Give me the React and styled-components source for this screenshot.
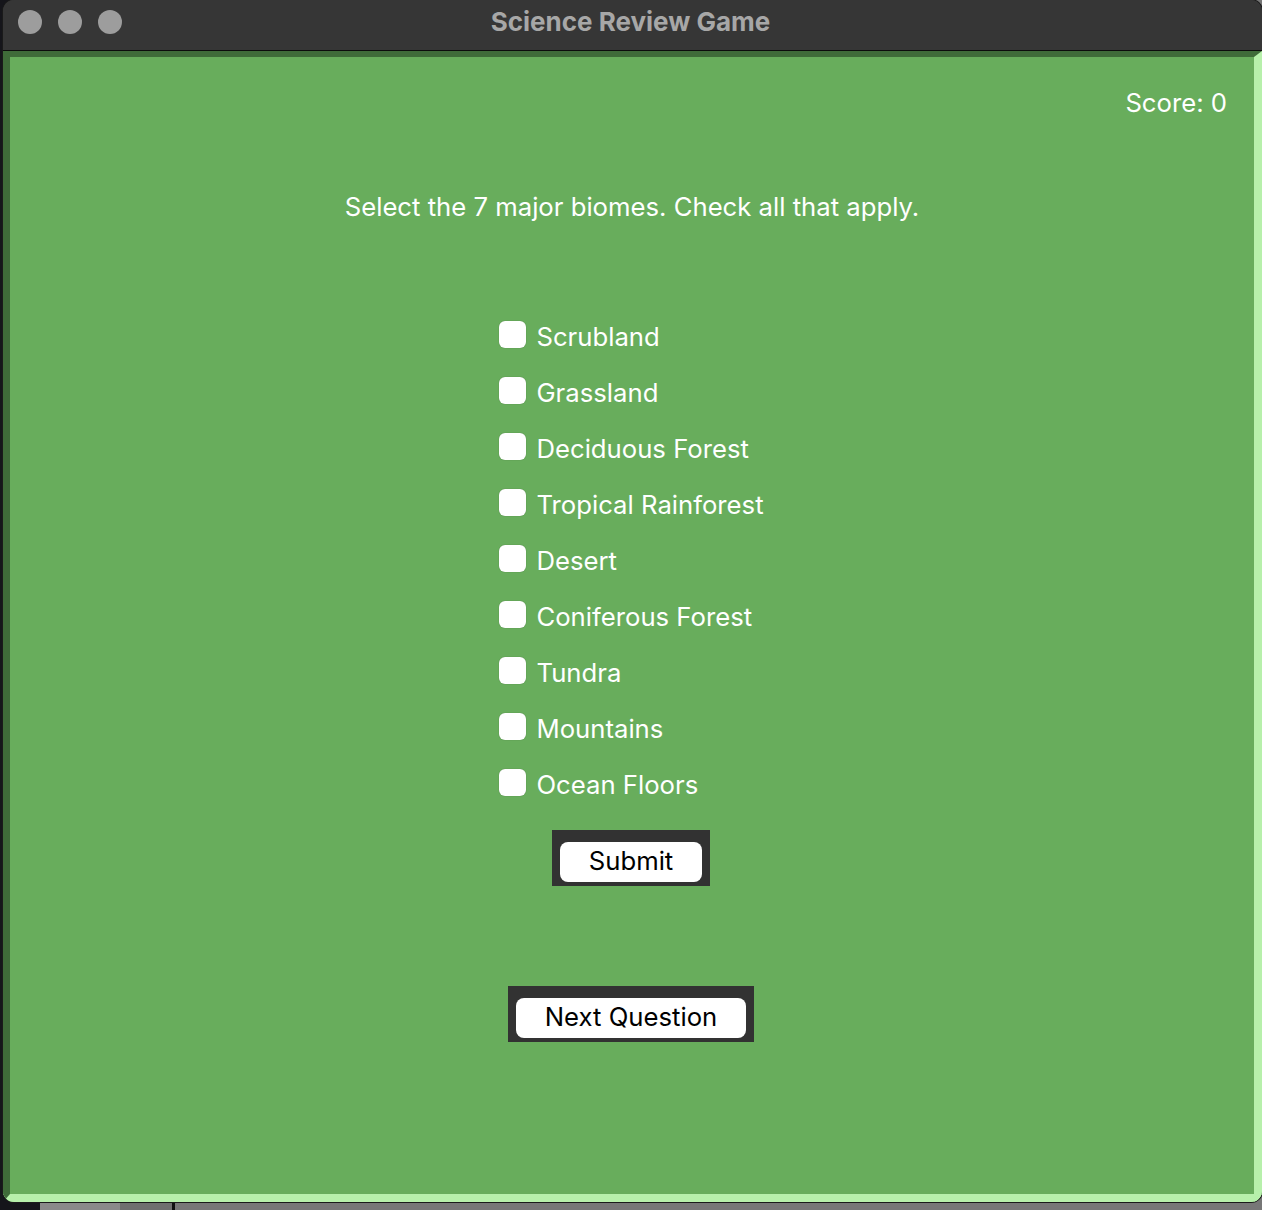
import React from "react";
import styled, { createGlobalStyle } from "styled-components";

const Global = createGlobalStyle`
  html, body { margin: 0; padding: 0; }
  body {
    background: #6f6f6f;
    width: 1262px;
    height: 1210px;
    overflow: hidden;
    font-family: Inter, "Liberation Sans", sans-serif;
  }
`;

const Desktop = styled.div`
  position: relative;
  width: 1262px;
  height: 1210px;
  background: linear-gradient(90deg, #15151a 0 40px, #8a8a8a 40px 120px, #6f6f6f 120px 172px, #111 172px 175px, #777 175px);
`;

const Window = styled.div`
  margin-left: 3px;
  width: 1259px;
  height: 1202px;
  border-radius: 11px;
  overflow: hidden;
  display: flex;
  flex-direction: column;
  background: #363636;
  box-shadow: 0 0 0 1px #1a1a1a;
`;

const TitleBar = styled.div`
  position: relative;
  height: 50px;
  flex: none;
  display: flex;
  align-items: center;
  justify-content: center;
  background: #363636;
  border-bottom: 1px solid #0c0c0c;
`;

const Lights = styled.div`
  position: absolute;
  left: 15px;
  top: 10px;
  display: flex;
  gap: 16px;
`;

const Light = styled.span`
  width: 24px;
  height: 24px;
  border-radius: 50%;
  background: #9d9d9d;
`;

const Title = styled.div`
  font-family: Inter, "Liberation Sans", Arial, sans-serif;
  font-weight: 700;
  font-size: 26px;
  color: #a7a7a7;
  margin-top: -8px;
  margin-left: -4px;
`;

const Content = styled.div`
  flex: 1;
  display: flex;
  flex-direction: column;
  align-items: center;
  background: #68ad5c;
  border-left: 7px solid #3f6b39;
  border-top: 6px solid #3f6b39;
  border-right: 8px solid #b7f0ab;
  border-bottom: 8px solid #b7f0ab;
  color: #fff;
  font-size: 25.7px;
`;

const ScoreRow = styled.div`
  align-self: stretch;
  display: flex;
  justify-content: flex-end;
  height: 28px;
  line-height: 28px;
  margin-top: 32px;
  padding-right: 27px;
`;

const Question = styled.div`
  height: 28px;
  line-height: 28px;
  margin-top: 76px;
`;

const List = styled.div`
  margin-top: 87px;
  display: flex;
  flex-direction: column;
`;

const Row = styled.label`
  height: 56px;
  display: flex;
  align-items: center;
  gap: 10px;
`;

const Box = styled.input`
  appearance: none;
  margin: -3px 0 0 -1px;
  width: 27px;
  height: 27px;
  border-radius: 6px;
  background: #fff;
  box-shadow: 0 0 1px rgba(0,0,0,0.35);
`;

const Frame = styled.div`
  margin-top: ${p => p.$top}px;
  margin-left: -2px;
  background: #323232;
  padding: 12px 8px 4px;
  display: flex;
`;

const Button = styled.button`
  width: ${p => p.$w}px;
  height: 40px;
  border: none;
  border-radius: 8px;
  background: #fff;
  color: #000;
  font-family: Inter, "Liberation Sans", sans-serif;
  font-size: 25.7px;
  padding: 0 0 2px;
  line-height: 38px;
`;

const biomes = [
  "Scrubland",
  "Grassland",
  "Deciduous Forest",
  "Tropical Rainforest",
  "Desert",
  "Coniferous Forest",
  "Tundra",
  "Mountains",
  "Ocean Floors",
];

export default function App() {
  return (
    <>
      <Global />
      <Desktop>
        <Window>
          <TitleBar>
            <Lights>
              <Light />
              <Light />
              <Light />
            </Lights>
            <Title>Science Review Game</Title>
          </TitleBar>
          <Content>
            <ScoreRow>Score: 0</ScoreRow>
            <Question>Select the 7 major biomes. Check all that apply.</Question>
            <List>
              {biomes.map(b => (
                <Row key={b}>
                  <Box type="checkbox" />
                  {b}
                </Row>
              ))}
            </List>
            <Frame $top={18}>
              <Button $w={142}>Submit</Button>
            </Frame>
            <Frame $top={100}>
              <Button $w={230}>Next Question</Button>
            </Frame>
          </Content>
        </Window>
      </Desktop>
    </>
  );
}
